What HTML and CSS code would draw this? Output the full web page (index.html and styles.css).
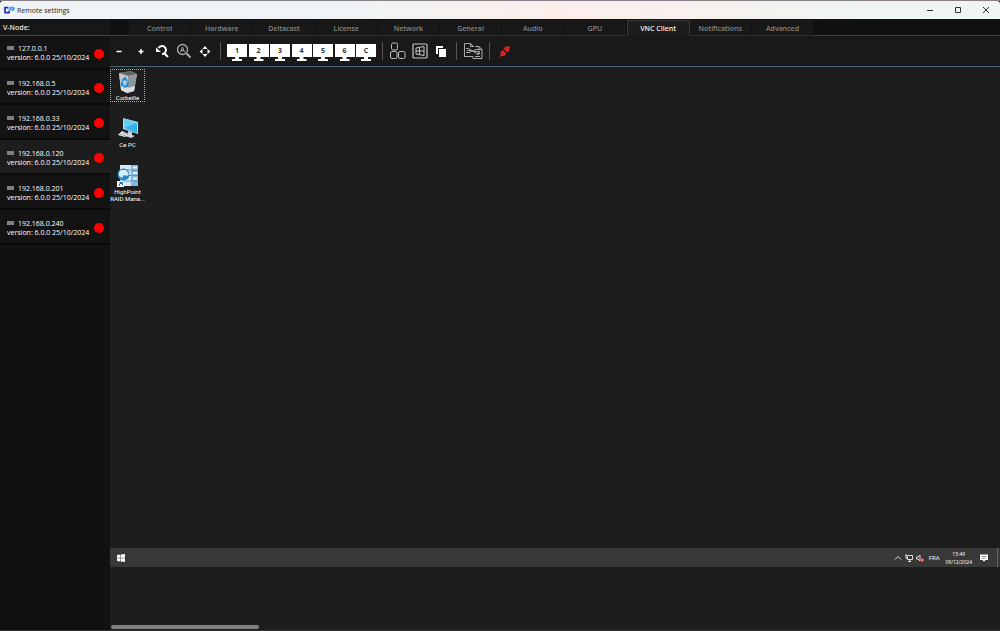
FILE: index.html
```html
<!DOCTYPE html>
<html lang="en">
<head>
    <meta charset="UTF-8">
    <meta name="viewport" content="width=device-width, initial-scale=1.0">
    <title>Remote settings</title>
    <link rel="stylesheet" href="styles.css">
</head>
<body>
    <div class="window">
        <header class="title-bar">
            <svg class="logo" viewBox="0 0 22 16" fill="none" stroke-width="3.500">
                <path d="M9 3H2v10h8v-3" stroke="#2b2fc4"/>
                <path d="M9 7h4V3h4q3 0 3 2.500t-3 2.500h-2" stroke="#3f9df5"/>
            </svg>
            <h1>Remote settings</h1>
            <div class="window-buttons">
                <button aria-label="Minimize"><svg viewBox="0 0 8 8"><path d="M1 4.500h6"/></svg></button>
                <button aria-label="Maximize"><svg viewBox="0 0 8 8"><path d="M1.500 1.500h5v5h-5z"/></svg></button>
                <button aria-label="Close"><svg viewBox="0 0 8 8"><path d="M1 1l6 6M7 1l-6 6"/></svg></button>
            </div>
        </header>

        <div class="content">
            <aside class="sidebar">
                <h2>V-Node:</h2>
                <ul class="node-list">
                    <li class="node">
                        <div><p class="address">127.0.0.1</p><p>version: 6.0.0 25/10/2024</p></div>
                        <span class="status"></span>
                    </li>
                    <li class="node">
                        <div><p class="address">192.168.0.5</p><p>version: 6.0.0 25/10/2024</p></div>
                        <span class="status"></span>
                    </li>
                    <li class="node">
                        <div><p class="address">192.168.0.33</p><p>version: 6.0.0 25/10/2024</p></div>
                        <span class="status"></span>
                    </li>
                    <li class="node selected">
                        <div><p class="address">192.168.0.120</p><p>version: 6.0.0 25/10/2024</p></div>
                        <span class="status"></span>
                    </li>
                    <li class="node">
                        <div><p class="address">192.168.0.201</p><p>version: 6.0.0 25/10/2024</p></div>
                        <span class="status"></span>
                    </li>
                    <li class="node">
                        <div><p class="address">192.168.0.240</p><p>version: 6.0.0 25/10/2024</p></div>
                        <span class="status"></span>
                    </li>
                </ul>
            </aside>

            <main class="main">
                <nav class="tabs">
                    <button>Control</button>
                    <button>Hardware</button>
                    <button>Deltacast</button>
                    <button>License</button>
                    <button>Network</button>
                    <button>General</button>
                    <button>Audio</button>
                    <button>GPU</button>
                    <button class="active">VNC Client</button>
                    <button>Notifications</button>
                    <button>Advanced</button>
                </nav>

                <div class="toolbar">
                    <div class="group zoom-group">
                        <button aria-label="Zoom out"><svg viewBox="0 0 16 16"><path d="M5.500 8.500h5" stroke="#fff" stroke-width="1.500"/></svg></button>
                        <button aria-label="Zoom in"><svg viewBox="0 0 16 16"><path d="M5.500 8.500h5M8 6v5" stroke="#fff" stroke-width="1.500"/></svg></button>
                        <button aria-label="Reset zoom">
                            <svg viewBox="0 0 16 16" fill="none" stroke="#fff" stroke-width="2">
                                <path d="M4.500 5A4 4 0 1 1 8 11M10.500 10.500l3.500 3.500"/>
                                <path d="M2 4.500v4.500h5z" fill="#fff" stroke="none"/>
                            </svg>
                        </button>
                        <button aria-label="Automatic zoom">
                            <svg viewBox="0 0 16 16" fill="none" stroke="#aaa">
                                <circle cx="6.500" cy="6.500" r="5" stroke-width="1.300"/>
                                <path d="M4.500 9L6.500 4l2 5M5 7.500h3"/>
                                <path d="M10.500 10.500l4 4" stroke-width="2"/>
                            </svg>
                        </button>
                        <button aria-label="Move">
                            <svg viewBox="0 0 16 16" fill="#fff"><path d="M8 3l2.500 3h-5zM8 14l2.500-3h-5zM2.500 8.500l3-2.500v5zM13.500 8.500l-3-2.500v5z"/></svg>
                        </button>
                    </div>
                    <span class="separator"></span>
                    <div class="group screen-group">
                        <button class="screen"><span>1</span></button>
                        <button class="screen"><span>2</span></button>
                        <button class="screen"><span>3</span></button>
                        <button class="screen"><span>4</span></button>
                        <button class="screen"><span>5</span></button>
                        <button class="screen"><span>6</span></button>
                        <button class="screen"><span>C</span></button>
                    </div>
                    <span class="separator"></span>
                    <div class="group key-group">
                        <button aria-label="Ctrl Alt Del">
                            <svg class="large" viewBox="0 0 18 18" fill="none" stroke="#b8b8b8">
                                <rect x="2.500" y="1" width="6" height="7" rx="1.500"/>
                                <rect x="1.500" y="9.500" width="6.500" height="7" rx="1.500"/>
                                <rect x="9.500" y="9.500" width="6.500" height="7" rx="1.500"/>
                            </svg>
                        </button>
                        <button aria-label="Windows key">
                            <svg class="large" viewBox="0 0 18 18" fill="none" stroke="#c4c4c4">
                                <rect x="2" y="2" width="14" height="14" rx="1" stroke-width="1.200"/>
                                <path d="M5 6l8-1.500v9L5 12zM8.500 5.500v7.500M5 9h8"/>
                            </svg>
                        </button>
                        <button aria-label="Copy">
                            <svg viewBox="0 0 16 16" fill="#fff"><path d="M3 3h7v2H5v6H3z"/><path d="M6 6h7v8H6z"/></svg>
                        </button>
                    </div>
                    <span class="separator"></span>
                    <button class="transfer" aria-label="Transfer files">
                        <svg viewBox="0 0 20 18" fill="none" stroke="#aaa">
                            <path d="M10 14.500H1.500v-13h6l3 3M7.500 1.500v3h3M12 4.500h4l3 3v9h-9v-2M16 4.500v3h3"/>
                            <path d="M3 6.500h2.500l8 5H17M3 10.500h3l7-3h4M14.500 9.500l2.500 2-3 1M4 8.500h4M11 9.500h6M12 14.500h5"/>
                        </svg>
                    </button>
                    <span class="separator"></span>
                    <button class="disconnect" aria-label="Disconnect">
                        <svg viewBox="0 0 16 16" fill="#d92323">
                            <path d="M2 14l1.500-2v-3L6 7l3.500 3.500L7.500 13h-3zM13 3l-1.500.5h-3L6.500 6l4 3.500 2-2V5z"/>
                            <path d="M6.500 7l4 3.500" stroke="#1a1a1a" stroke-width=".8"/>
                        </svg>
                    </button>
                </div>

                <section class="remote">
                    <div class="desktop">
                        <div class="shortcut focused">
                            <svg viewBox="0 0 24 24">
                                <path d="M3 3l12-2 6 3-3 17-7 2-6-3z" fill="#a6abae"/>
                                <path d="M3 3l9 3 9-2-6-3z" fill="#60666a"/>
                                <path d="M3 3l9 3v17l-7-3z" fill="#c5c9cb"/>
                                <path d="M12 6l9-2-3 17-6 2z" fill="#92979a"/>
                                <path d="M5 16l6 2 8-2-1 5-7 2-6-3z" fill="#d9dcdd"/>
                                <path d="M6 11l3-3 2 3M12 12l-1 4-3 1M6 12l0 3 2 1" fill="none" stroke="#168fe0" stroke-width="2"/>
                            </svg>
                            <span>Corbeille</span>
                        </div>
                        <div class="shortcut">
                            <svg viewBox="0 0 24 24">
                                <path d="M7 1l15 4v12L7 12z" fill="#b5e3f7"/>
                                <path d="M8 2l13 4v10L8 11z" fill="#30b1ec"/>
                                <path d="M8 2l13 4-13 5z" fill="#66cdf7"/>
                                <path d="M12 14l4 1v3l3 1-4 2-6-2 3-2z" fill="#c8d3d9"/>
                                <path d="M6 14l7 3-4 3-7-2z" fill="#eef3f5"/>
                                <path d="M4 17l6 2M6 15.500l6 2" stroke="#9aa6ac"/>
                            </svg>
                            <span>Ce PC</span>
                        </div>
                        <div class="shortcut">
                            <svg viewBox="0 0 24 24">
                                <path d="M4 1h18v21H4z" fill="#d3e8f7"/>
                                <path d="M15 1h7v21h-7z" fill="#82b5dc"/>
                                <path d="M4 6h18M4 11.500h18M4 17h18" stroke="#5d9bcd"/>
                                <path d="M17 3.500h4M17 9h4M17 14.500h4" stroke="#e8f7ff" stroke-width="2"/>
                                <circle cx="7.500" cy="10.500" r="6" fill="#2687c6"/>
                                <path d="M3 8l2-2 5 0 3 4-2 2-3-1-2 3-3-2z" fill="#d6effa"/>
                                <path d="M1 17h7v6H1z" fill="#fff"/>
                                <path d="M3 22q0-3 3-3M3.500 18.500h3v3" fill="none" stroke="#175ea4"/>
                            </svg>
                            <span>HighPoint<br>RAID Mana...</span>
                        </div>
                    </div>

                    <footer class="taskbar">
                        <button class="start" aria-label="Start">
                            <svg viewBox="0 0 8 8" fill="#fff"><path d="M0 1l3.500-.5v3.200H0zM4 .4L8 0v3.700H4zM0 4.200h3.500v3.200L0 7zM4 4.200h4V8l-4-.5z"/></svg>
                        </button>
                        <div class="tray">
                            <svg viewBox="0 0 8 8"><path d="M1 5.500l3-3 3 3"/></svg>
                            <svg viewBox="0 0 8 8"><path d="M2.500 1.500h5v4h-5zM0 1h2M1 1v3.500h1.500M3 7.500h3M5 5.500v2"/></svg>
                            <svg viewBox="0 0 8 8">
                                <path d="M.5 3h1.500l2-2v6l-2-2H.5z"/>
                                <circle cx="6" cy="6" r="2" fill="#e2474b" stroke="none"/>
                                <path d="M5.300 5.300l1.400 1.400M6.700 5.300L5.300 6.700" stroke-width=".5"/>
                            </svg>
                            <span class="language">FRA</span>
                            <time class="clock">15:49<br>09/12/2024</time>
                            <svg viewBox="0 0 8 8">
                                <path d="M0 .5h8v5.500H5.500L4 7.700 2.500 6H0z" fill="#fff" stroke="none"/>
                                <path d="M1.500 2.500h5M1.500 4.200h4" stroke="#555" stroke-width=".6"/>
                            </svg>
                        </div>
                    </footer>
                </section>

                <div class="scroll-area"><div class="scroll-thumb"></div></div>
            </main>
        </div>
    </div>
</body>
</html>
```

FILE: styles.css
```css
* {
    box-sizing: border-box;
}
body {
    margin: 0;
    background-color: #1d1d1d;
    color: #e6e6e6;
    font-family: "Open Sans", "Noto Sans", sans-serif;
    font-size: 7px;
    line-height: 9px;
}
h1, h2, p, ul {
    margin: 0;
    padding: 0;
    font-size: 7px;
}
button {
    padding: 0;
    border: none;
    background: none;
    color: inherit;
    font: inherit;
    cursor: pointer;
}
svg {
    display: block;
    flex: none;
}
.window {
    display: flex;
    flex-direction: column;
    height: 100vh;
    border-top: 1px solid #858085;
    border-bottom: 1px solid #343030;
}

/* Title bar */
.title-bar {
    display: flex;
    align-items: center;
    flex: none;
    height: 18px;
    padding-left: 4px;
    border-radius: 3px 3px 0 0;
    background: linear-gradient(90deg, #f0f4f6 35%, #fbefec 55%, #f9f0ed 65%, #eff4f4 88%);
    color: #222;
}
.title-bar h1 {
    flex: 1;
    font-weight: 400;
}
.logo {
    width: 11px;
    height: 8px;
    margin-right: 2px;
}
.window-buttons {
    display: flex;
}
.window-buttons button {
    display: flex;
    justify-content: center;
    width: 28px;
}
.window-buttons svg {
    width: 8px;
    height: 8px;
    fill: none;
    stroke: #333;
    stroke-width: 1;
}

.content {
    display: flex;
    flex: 1;
    min-height: 0;
}

/* Sidebar */
.sidebar {
    flex: none;
    width: 110px;
    background-color: #111;
}
.sidebar h2 {
    height: 17px;
    padding: 4px 3px;
    border-bottom: 1px solid #37494c;
    background-color: #171717;
    font-weight: 600;
}
.node-list {
    list-style: none;
}
.node {
    display: flex;
    align-items: center;
    justify-content: space-between;
    height: 35px;
    padding: 2px 6px 0 7px;
    border-bottom: 2px solid #090909;
    background-color: #131313;
    color: #fff;
    white-space: nowrap;
}
.node:first-child {
    height: 34px;
}
.node.selected {
    background-color: #1d1d1d;
}
.address::before {
    content: "";
    display: inline-block;
    width: 7px;
    height: 4px;
    margin-right: 4px;
    background-color: #808080;
    vertical-align: 1px;
}
.status {
    width: 10px;
    height: 10px;
    margin-top: 1px;
    border-radius: 50%;
    background-color: #f00;
}

/* Main area */
.main {
    display: flex;
    flex-direction: column;
    flex: 1;
    min-width: 0;
}
.tabs {
    display: flex;
    flex: none;
    height: 17px;
    padding: 1px 186px 0 19px;
    border-bottom: 1px solid #34494c;
    background-color: #101010;
}
.tabs button {
    flex: 1 1 0;
    height: 16px;
    padding-top: 2px;
    border-right: 1px solid #101010;
    border-bottom: 1px solid #303030;
    background-color: #181818;
    color: #858585;
    font-weight: 600;
}
.tabs .active {
    padding-top: 1px;
    border: 1px solid #3a3a3a;
    border-bottom-color: #1d1d1d;
    background-color: #1d1d1d;
    color: #eee;
}
.toolbar {
    display: flex;
    align-items: center;
    flex: none;
    height: 31px;
    border-bottom: 1px solid #456472;
    background-color: #191919;
}
.group {
    display: flex;
    align-items: center;
    justify-content: space-between;
}
.toolbar button {
    display: flex;
    align-items: center;
    justify-content: center;
    width: 18px;
    height: 18px;
}
.toolbar svg {
    width: 16px;
    height: 16px;
}
.toolbar .large {
    width: 18px;
    height: 18px;
}
.zoom-group {
    width: 104px;
}
.screen-group {
    width: 149px;
}
.key-group {
    width: 61px;
}
.separator {
    width: 1px;
    height: 18px;
    margin: 0 6px;
    background-color: #555;
}
.toolbar .screen {
    flex-direction: column;
    justify-content: flex-end;
    width: 20px;
    height: 20px;
    color: #333;
    font-weight: 700;
}
.screen span {
    width: 20px;
    height: 13px;
    background-color: #fff;
    line-height: 13px;
}
.screen::after {
    content: "";
    width: 10px;
    height: 4px;
    background-color: #fff;
    clip-path: polygon(30% 0, 70% 0, 70% 50%, 100% 50%, 100% 100%, 0 100%, 0 50%, 30% 50%);
}
.toolbar .transfer {
    width: 20px;
}
.transfer svg {
    width: 20px;
    height: 18px;
}

/* Remote desktop */
.remote {
    display: flex;
    flex-direction: column;
    flex: 1;
    min-height: 0;
}
.desktop {
    display: flex;
    flex-direction: column;
    align-items: flex-start;
    flex: 1;
    gap: 14px;
    padding-top: 2px;
}
.shortcut {
    display: flex;
    flex-direction: column;
    align-items: center;
    width: 35px;
    min-height: 33px;
    border: 1px dotted transparent;
    color: #fff;
    font-family: Roboto, "Open Sans", sans-serif;
    font-size: 6px;
    line-height: 7px;
    text-align: center;
    white-space: nowrap;
}
.shortcut.focused {
    border-color: #aaa;
}
.shortcut svg {
    width: 24px;
    height: 24px;
}
.taskbar {
    display: flex;
    align-items: center;
    justify-content: space-between;
    flex: none;
    height: 19px;
    padding: 0 2px 0 7px;
    background-color: #383838;
}
.start svg {
    width: 8px;
    height: 8px;
}
.tray {
    display: flex;
    align-items: center;
    gap: 3px;
    height: 19px;
    padding-right: 9px;
    border-right: 1px solid #666;
    color: #fff;
    font-size: 6px;
    line-height: 8px;
}
.tray svg {
    width: 8px;
    height: 8px;
    fill: none;
    stroke: #ddd;
    stroke-width: 1;
}
.language {
    padding: 0 3px 0 2px;
}
.clock {
    margin-right: 5px;
    font-size: 5px;
    text-align: center;
}
.scroll-area {
    display: flex;
    align-items: flex-end;
    flex: none;
    height: 63px;
    padding: 0 1px 1px;
}
.scroll-thumb {
    width: 16.7%;
    height: 4px;
    border-radius: 2px;
    background-color: #808080;
}
```
